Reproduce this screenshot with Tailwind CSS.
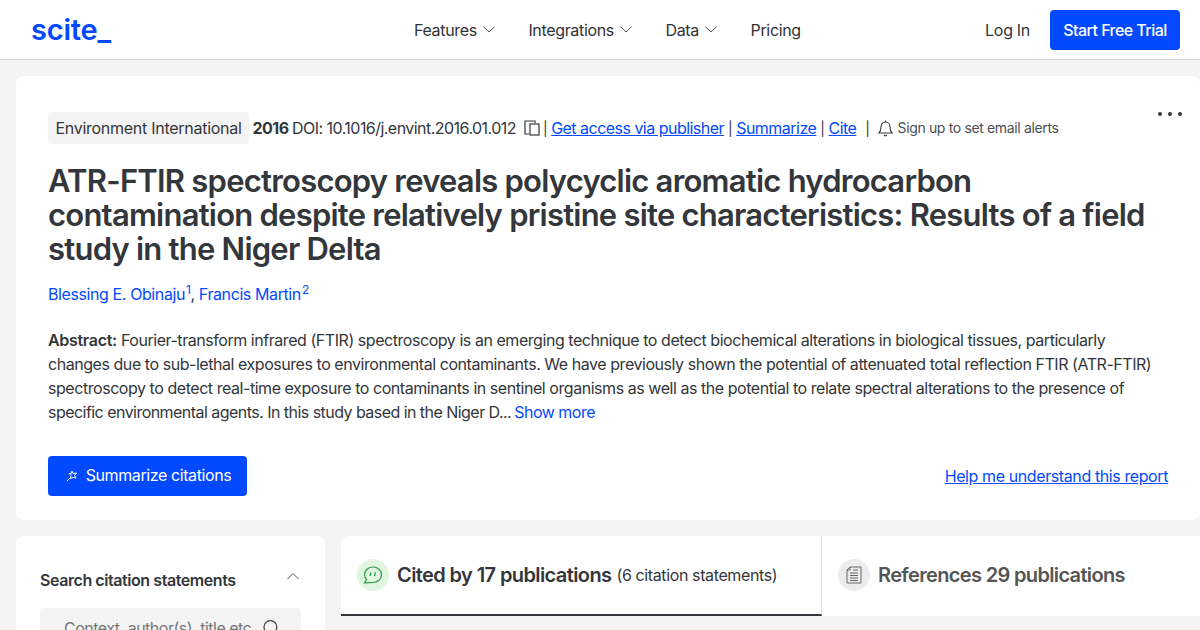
<!DOCTYPE html>
<html>
<head>
<meta charset="utf-8">
<script src="https://cdn.jsdelivr.net/npm/@tailwindcss/browser@4"></script>
</head>
<body class="h-[630px] w-[1200px] overflow-hidden bg-[#f4f4f4] font-['Inter',sans-serif] text-[#33363a]">
<header class="flex h-[60px] items-center justify-between border-b border-[#d9d9d9] bg-white pl-[31px] pr-5">
  <a class="-mt-[1px] text-[29px] leading-none font-semibold tracking-[-0.2px] text-[#0349ff]">scite_</a>
  <nav class="absolute left-[414px] top-0 flex h-[59px] items-center gap-[33.6px] text-base tracking-[-0.34px] text-[#2f3237]">
    <span class="flex items-center gap-[6px]">Features <svg class="h-[7px] w-[12px]" viewBox="0 0 12 7" fill="none" stroke="#555" stroke-width="1"><path d="M0.5 0.7 L6 6 L11.5 0.7"/></svg></span>
    <span class="flex items-center gap-[6px]">Integrations <svg class="h-[7px] w-[12px]" viewBox="0 0 12 7" fill="none" stroke="#555" stroke-width="1"><path d="M0.5 0.7 L6 6 L11.5 0.7"/></svg></span>
    <span class="flex items-center gap-[6px]">Data <svg class="h-[7px] w-[12px]" viewBox="0 0 12 7" fill="none" stroke="#555" stroke-width="1"><path d="M0.5 0.7 L6 6 L11.5 0.7"/></svg></span>
    <span>Pricing</span>
  </nav>
  <div class="flex items-center gap-5 text-base tracking-[-0.3px]">
    <span>Log In</span>
    <span class="flex h-10 w-[130px] items-center justify-center rounded bg-[#0349ff] font-medium tracking-[-0.55px] text-white">Start Free Trial</span>
  </div>
</header>
<main class="flex flex-col gap-4 pl-4 pt-4">
  <section class="relative h-[444px] rounded-lg bg-white pl-8 pr-8 pt-9">
    <div class="flex h-8 items-center whitespace-nowrap text-base tracking-[-0.52px]">
      <span class="flex h-8 w-[201px] items-center justify-center rounded bg-[#f4f4f4] tracking-[-0.27px]">Environment International</span>
      <b class="ml-[3.5px] font-bold">2016</b>
      <span class="ml-[3.5px] tracking-[-0.54px]">DOI: 10.1016/j.envint.2016.01.012</span>
      <svg class="ml-[8px] h-4 w-[17px]" viewBox="0 0 17 16" fill="none" stroke="#33363a" stroke-width="1.2"><path d="M5 14 H1 V1 H11 V3"/><rect x="6" y="4" width="9" height="11"/></svg>
      <span class="ml-[2px] text-[14px]">|</span>
      <a class="ml-[4px] text-[#0349ff] underline">Get access via publisher</a>
      <span class="ml-[4px] text-[14px]">|</span>
      <a class="ml-[4px] text-[#0349ff] underline">Summarize</a>
      <span class="ml-[4px] text-[14px]">|</span>
      <a class="ml-[4px] text-[#0349ff] underline">Cite</a>
      <span class="ml-[9px] text-[14px]">|</span>
      <svg class="ml-[8px] h-[17px] w-[15px]" viewBox="0 0 15 17" fill="none" stroke="#33363a" stroke-width="1.1"><path d="M1 13 C3 11 3 9 3 7 C3 4 5 2 7.5 2 C10 2 12 4 12 7 C12 9 12 11 14 13 Z"/><path d="M6 15 C7 16 8 16 9 15"/><path d="M7.5 0.5 V2"/></svg>
      <span class="ml-[5px] text-sm tracking-[-0.35px] text-[#4a4d52]">Sign up to set email alerts</span>
    </div>
    <div class="absolute right-[18px] top-[36px] flex gap-[6px]">
      <i class="block h-1 w-1 rounded-full bg-[#33363a]"></i><i class="block h-1 w-1 rounded-full bg-[#33363a]"></i><i class="block h-1 w-1 rounded-full bg-[#33363a]"></i>
    </div>
    <h1 class="mt-[20px] w-[1110px] text-[31px] leading-[34px] font-semibold tracking-[-0.77px]">ATR-FTIR spectroscopy reveals polycyclic aromatic hydrocarbon contamination despite relatively pristine site characteristics: Results of a field study in the Niger Delta</h1>
    <p class="mt-[16px] text-base leading-6 tracking-[-0.4px] text-[#0349ff]">Blessing E. Obinaju<sup class="ml-px text-xs">1</sup><span class="text-[#33363a]">, </span>Francis Martin<sup class="ml-px text-xs">2</sup></p>
    <p class="mt-[22px] w-[1108px] text-base leading-6 tracking-[-0.45px]"><b class="font-semibold tracking-[-0.3px]">Abstract:</b> Fourier-transform infrared (FTIR) spectroscopy is an emerging technique to detect biochemical alterations in biological tissues, particularly changes due to sub-lethal exposures to environmental contaminants. We have previously shown the potential of attenuated total reflection FTIR (ATR-FTIR) spectroscopy to detect real-time exposure to contaminants in sentinel organisms as well as the potential to relate spectral alterations to the presence of <span class="tracking-[-0.54px]">specific environmental agents. In this study based in the Niger D...</span> <a class="-ml-[1px] tracking-[-0.5px] text-[#0349ff]">Show more</a></p>
    <div class="mt-[32px] flex items-center justify-between">
      <span class="flex h-10 w-[199px] items-center justify-center gap-2 rounded bg-[#0349ff] pb-[2px] pl-[2px] text-base tracking-[-0.4px] text-white">
        <svg class="mt-[2px] h-3 w-3" viewBox="0 0 12 12" fill="none" stroke="#fff" stroke-width="1"><path d="M1 11 L5 7"/><path d="M6 1 L7 3.5 L10.5 3 L8.5 5.5 L10 8 L7 7.5 L4.5 8.5 L5 5.5 L3 3.5 L5.5 3.5 Z"/></svg>
        Summarize citations</span>
      <a class="text-base tracking-[-0.4px] text-[#0349ff] underline">Help me understand this report</a>
    </div>
  </section>
  <div class="flex gap-4">
    <aside class="h-[200px] w-[309px] rounded-lg bg-white px-6 pt-[32px]">
      <div class="flex items-center justify-between">
        <h3 class="text-base font-semibold tracking-[-0.43px]">Search citation statements</h3>
        <svg class="mb-2 mr-[2px] h-[8px] w-[12px]" viewBox="0 0 12 8" fill="none" stroke="#555" stroke-width="1"><path d="M0.5 7 L6 1.5 L11.5 7"/></svg>
      </div>
      <div class="mt-[16px] flex h-10 items-center justify-between rounded bg-[#f4f4f4] pl-6 pr-[22px] text-base whitespace-nowrap tracking-[-0.5px] text-[#777]">
        <span>Context, author(s), title etc.</span>
        <svg class="h-4 w-4 shrink-0" viewBox="0 0 16 16" fill="none" stroke="#444" stroke-width="1.2"><circle cx="7.4" cy="7" r="6.4"/><path d="M12 11.5 L15.5 15"/></svg>
      </div>
    </aside>
    <div class="flex h-20 w-[859px] rounded-tl-lg bg-white">
      <div class="flex h-20 w-[481px] items-center gap-2 border-r border-b-2 border-b-[#33363a] border-r-[#e0e0e0] pl-4">
        <span class="flex h-8 w-8 items-center justify-center rounded-full bg-[#e1f5e1]">
          <svg class="h-5 w-5" viewBox="0 0 20 20" fill="none" stroke="#2e9e4a" stroke-width="1.2"><path d="M1.5 18 L3.6 14.6 C2.4 13.3 1.5 11.7 1.5 10 C1.5 5.5 5.3 2 10 2 C14.7 2 18.5 5.5 18.5 10 C18.5 14.2 14.7 17.5 10 17.5 C8 17.5 5.5 17.8 1.5 18 Z"/><path d="M7 7.8 C8 8 8 9.5 6.6 10.8 M11.5 7.8 C12.5 8 12.5 9.5 11.1 10.8" stroke-width="1.4"/></svg>
        </span>
        <span class="text-xl font-semibold tracking-[-0.6px]">Cited by 17 publications</span>
        <span class="-ml-[3px] text-base tracking-[-0.38px]">(6 citation statements)</span>
      </div>
      <div class="flex h-[78px] items-center gap-2 pl-4">
        <span class="flex h-8 w-8 items-center justify-center rounded-full bg-[#ececec]">
          <svg class="h-5 w-5" viewBox="0 0 20 20" fill="none" stroke="#666" stroke-width="1"><path d="M6 2 H17 V18 H3 V5 Z M6 2 V5 H3"/><path d="M6 8 H14 M6 10.5 H14 M6 13 H14 M6 15.5 H14 M9 5 H14"/></svg>
        </span>
        <span class="text-xl font-semibold tracking-[-0.65px] text-[#555]">References 29 publications</span>
      </div>
    </div>
  </div>
</main>
</body>
</html>
